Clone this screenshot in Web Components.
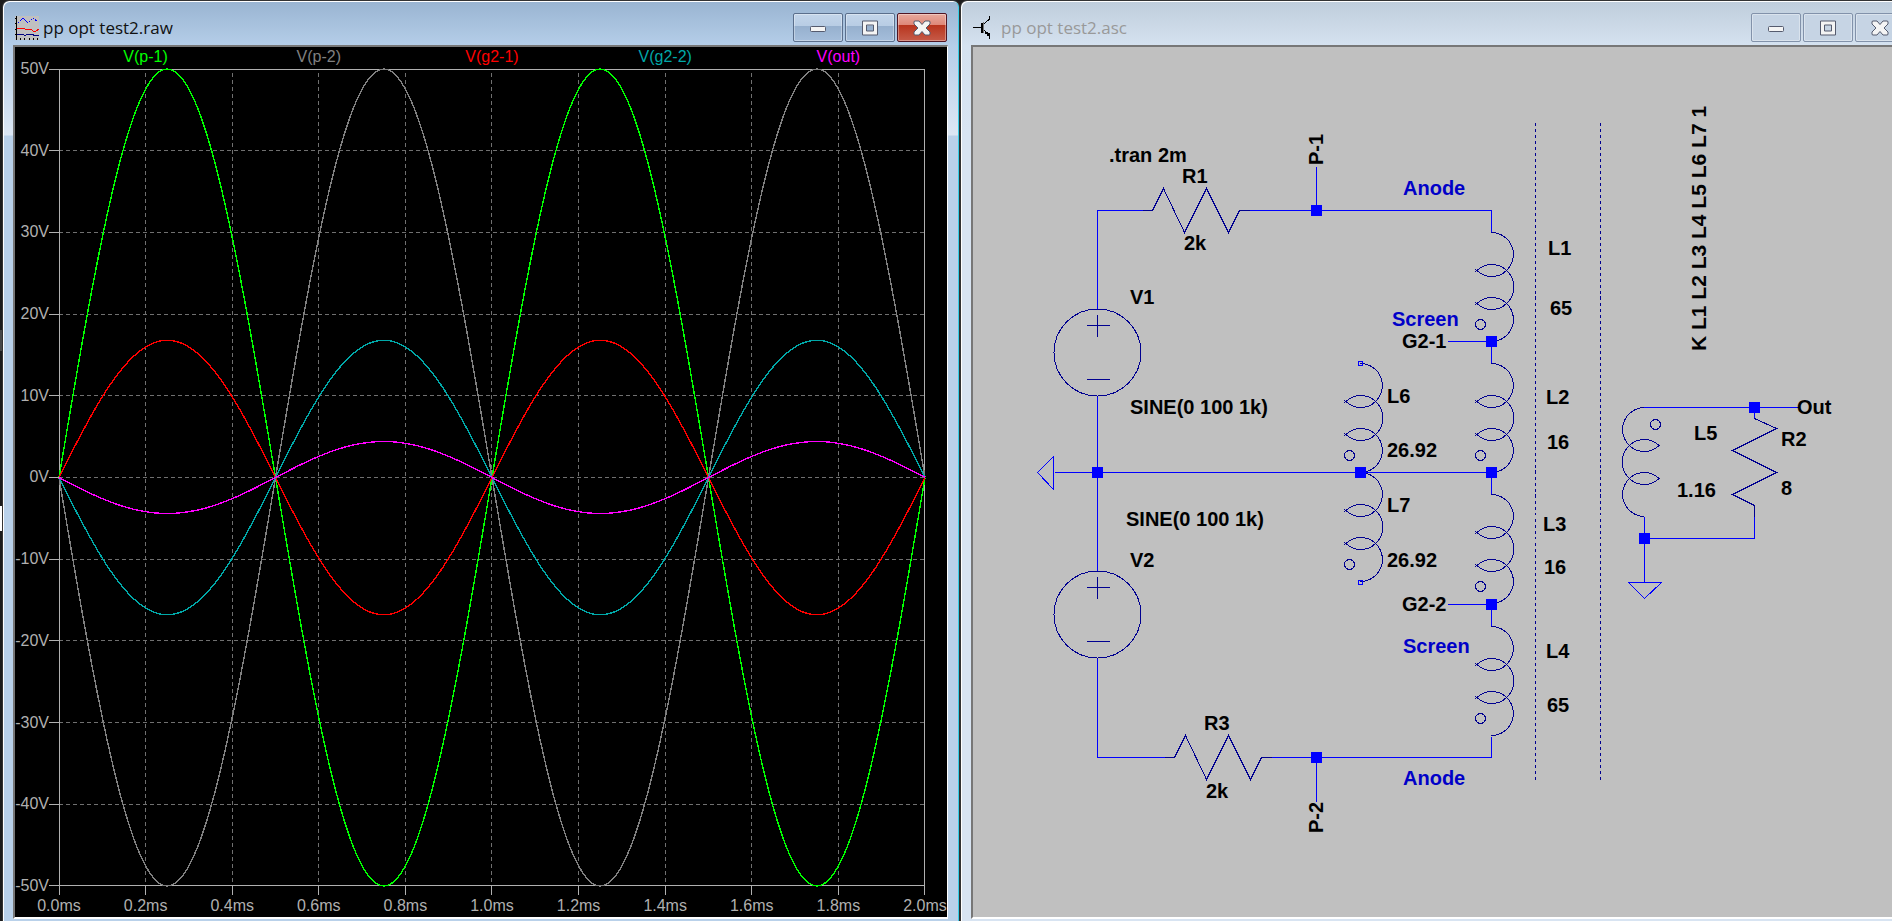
<!DOCTYPE html>
<html lang="en">
<head>
<meta charset="utf-8">
<title>pp opt test2</title>
<style>
  body {
    margin: 0;
    overflow: hidden;
    font-family: "Liberation Sans", Arial, sans-serif;
  }
</style>
</head>
<body>
<spice-desktop>
  <mdi-window label="pp opt test2.raw" active>
    <wave-icon slot="icon"></wave-icon>
    <wave-plot></wave-plot>
  </mdi-window>
  <mdi-window label="pp opt test2.asc">
    <transistor-icon slot="icon"></transistor-icon>
    <schematic-sheet></schematic-sheet>
  </mdi-window>
</spice-desktop>

<script>
// Small helper: every element here renders one static template
function attach(el, html) {
  const template = document.createElement('template');
  template.innerHTML = html;
  el.attachShadow({ mode: 'open' }).appendChild(template.content.cloneNode(true));
}

// desktop, the second window runs past the right edge
class SpiceDesktop extends HTMLElement {
  constructor() {
    super();
    attach(this, `
      <style>
        :host {
          display: grid;
          grid-template-columns: 1fr 1fr;
          height: 100vh;
          margin-right: -26px;
          padding-left: 2px;
          background: linear-gradient(#1c1c1c 330px, #484848 330px, #484848 351px, #1c1c1c 351px, #1c1c1c 506px, #fff 506px, #fff 531px, #1c1c1c 531px);
        }
      </style>
      <slot></slot>
    `);
  }
}

class MdiWindow extends HTMLElement {
  constructor() {
    super();
    attach(this, `
      <style>
        :host {
          --bar-top: #bfcddb;
          --bar-end: #d5e2f0;
          --side: #d8e4f2;
          --side-light: #d8e4f2;
          --edge: #d8e4f2;
          --title: #999;
          --btn: #c6d4e4;
          --btn-border: #8292aa;
          --close: #c6d4e4;
          --close-border: #8292aa;
          display: flex;
          flex-direction: column;
          box-sizing: border-box;
          min-width: 0;
          height: 100vh;
          padding: 0 10px 2px;
          border: 1px solid #333;
          border-bottom: 0;
          border-radius: 7px 7px 0 0;
          box-shadow: inset 1px 1px #fff, inset -1px 0 var(--edge);
          background: linear-gradient(var(--bar-top), var(--bar-end) 45px, var(--side-light) 134px, var(--side) 135px);
        }
        :host([active]) {
          --bar-top: #99b4d1;
          --bar-end: #b5cee9;
          --side: #b9d1ea;
          --side-light: #dce7f4;
          --edge: #35cfe8;
          --title: #111;
          --btn: linear-gradient(#c3d5ea, #b7cce4 46%, #96b0ce 46%, #a5bedb);
          --btn-border: #5b6f8c;
          --close: linear-gradient(#e7a99d, #de8677 42%, #b8351e 42%, #c65b49);
          --close-border: #501523;
        }
        header {
          display: flex;
          align-items: center;
          height: 29px;
          padding: 12px 2px 3px;
        }
        h1 {
          flex: 1;
          margin: 0 0 0 4px;
          color: var(--title);
          font: 17px/24px "Open Sans", "Noto Sans", sans-serif;
          white-space: nowrap;
        }
        nav {
          display: flex;
          gap: 2px;
        }
        button {
          display: grid;
          place-items: center;
          width: 50px;
          height: 29px;
          padding: 0;
          border: 1px solid var(--btn-border);
          border-radius: 2px;
          background: var(--btn);
          box-shadow: inset 0 0 0 1px rgba(255,255,255,0.35);
        }
        button.close {
          border-color: var(--close-border);
          background: var(--close);
        }
        button svg {
          fill: #f4f4f4;
          stroke: #555b6e;
        }
        .client {
          display: flex;
          flex: 1;
          min-height: 0;
          margin-right: 1px;
          border: 2px solid;
          border-width: 2px 1px 2px 2px;
          border-color: #777 #fff #fff #777;
        }
        ::slotted(:not([slot])) {
          flex: 1;
          min-width: 0;
        }
      </style>
      <header>
        <slot name="icon"></slot>
        <h1></h1>
        <nav>
          <button aria-label="Minimize">
            <svg width="18" height="16"><rect x="1.5" y="6.5" width="15" height="5" rx="1"/></svg>
          </button>
          <button aria-label="Maximize">
            <svg width="18" height="16"><path fill-rule="evenodd" d="M1.500 1H16.500V15H1.500ZM5.500 5V11H12.500V5Z"/></svg>
          </button>
          <button class="close" aria-label="Close">
            <svg width="18" height="16"><path d="M1 1.500L2 1H6L9 4.500L12 1H16L17 1.500V4L13 8L17 12V14.500L16 15H12L9 11.500L6 15H2L1 14.500V12L5 8L1 4Z"/></svg>
          </button>
        </nav>
      </header>
      <div class="client"><slot></slot></div>
    `);
  }

  connectedCallback() {
    this.shadowRoot.querySelector('h1').textContent = this.getAttribute('label');
  }
}

class WaveIcon extends HTMLElement {
  constructor() {
    super();
    attach(this, `
      <style>
        :host { display: block; width: 24px; height: 24px; }
        svg { display: block; fill: none; shape-rendering: crispEdges; }
      </style>
      <svg width="24" height="24" aria-hidden="true">
        <rect width="24" height="24" fill="#c0c0c0"/>
        <path d="M1 0V24" stroke="#000" stroke-width="1"/>
        <path d="M0 2H2M0 7H2M0 13H2M0 18H2M5 22V24M9 22V24M14 22V24M18 22V24M22 22V24" stroke="#000"/>
        <path d="M3 7L8 2L13 7L18 2L23 6" stroke="#00f" stroke-dasharray="2 1"/>
        <path d="M2 13L5 12L10 13H16L18 15H21L24 13" stroke="#f00"/>
        <path d="M2 18.500H8L10 19.500L12 18.500H18L19 19.500H24" stroke="#000080"/>
      </svg>
    `);
  }
}

class TransistorIcon extends HTMLElement {
  constructor() {
    super();
    attach(this, `
      <style>
        :host { display: block; width: 24px; height: 24px; }
        svg { display: block; fill: none; stroke: #000; shape-rendering: crispEdges; }
      </style>
      <svg width="24" height="24" aria-hidden="true">
        <path d="M0 11.500H8M16.500 0V3L11 8M11 14L16.500 20V23"/>
        <path d="M9 7V17" stroke-width="2"/>
        <path d="M10.500 6V17" stroke="#777"/>
        <path d="M12 16H15V17H17V20H14V18H12Z" fill="#000" stroke="none"/>
      </svg>
    `);
  }
}

const TRACES = [
  { name: 'V(p-1)', color: '#00ff00', volts: 50 },
  { name: 'V(p-2)', color: '#808080', volts: -50 },
  { name: 'V(g2-1)', color: '#ff0000', volts: 16.8 },
  { name: 'V(g2-2)', color: '#00a8a8', volts: -16.8 },
  { name: 'V(out)', color: '#ff00ff', volts: -4.4 }
];

class WavePlot extends HTMLElement {
  constructor() {
    super();
    attach(this, `
      <style>
        :host {
          display: grid;
          grid-template-columns: 44px 1fr;
          grid-template-rows: 22px 1fr 31px;
          padding-right: 22px;
          background: #000;
          color: #b0b0b0;
          font-size: 16px;
          line-height: 20px;
        }
        .legend {
          grid-column: 2;
          display: grid;
          grid-template-columns: repeat(5, 1fr);
          text-align: center;
        }
        .volts, .time {
          display: flex;
          justify-content: space-between;
        }
        .volts {
          flex-direction: column;
          padding-right: 10px;
        }
        .volts span {
          display: flex;
          align-items: center;
          justify-content: flex-end;
          height: 0;
        }
        .time {
          grid-column: 2;
          padding-top: 10px;
        }
        .time span {
          display: flex;
          justify-content: center;
          width: 0;
        }
        svg {
          display: block;
          width: 100%;
          height: 100%;
          min-height: 0;
          overflow: visible;
          fill: none;
          shape-rendering: crispEdges;
        }
        path { vector-effect: non-scaling-stroke; }
        .grid { stroke: #707070; stroke-dasharray: 4 3; }
        .axis { stroke: #b0b0b0; }
        .trace { stroke-width: 1.4; }
      </style>
      <div class="legend"></div>
      <div class="volts"></div>
      <svg viewBox="0 0 1000 1000" preserveAspectRatio="none" role="img" aria-label="Waveforms"></svg>
      <div class="time"></div>
    `);
  }

  connectedCallback() {
    const root = this.shadowRoot;
    const volts = [];
    const time = [];
    let grid = '';
    let ticks = '';
    for (let i = 0; i <= 10; i++) {
      volts.push(`<span>${50 - i * 10}V</span>`);
      time.push(`<span>${(i * 0.2).toFixed(1)}ms</span>`);
      if (i > 0 && i < 10) grid += `M0 ${i * 100}H1000M${i * 100} 5V1000`;
      ticks += `M-12 ${i * 100}H0M${i * 100} 1000V1011`;
    }
    root.querySelector('.legend').innerHTML =
      TRACES.map(t => `<span style="color:${t.color}">${t.name}</span>`).join('');
    root.querySelector('.volts').innerHTML = volts.join('');
    root.querySelector('.time').innerHTML = time.join('');
    root.querySelector('svg').innerHTML =
      `<path class="grid" d="${grid}"/><path class="axis" d="${ticks}M0 0H1000V1000H0Z"/>` +
      TRACES.map(t => `<path class="trace" stroke="${t.color}" d="${this.sine(t.volts)}"/>`).join('');
  }

  // two periods of a 1 kHz sine over 2 ms, -50V..50V full scale
  sine(peak) {
    let d = 'M0 500';
    for (let i = 1; i <= 200; i++) {
      const y = 500 - peak * 10 * Math.sin(i * Math.PI / 50);
      d += `L${i * 5} ${y.toFixed(1)}`;
    }
    return d;
  }
}

// x, baseline y, text, optional kind: c = comment, v = vertical, d = directive
const LABELS = [
  [136, 115, '.tran 2m'], [209, 136, 'R1'], [211, 203, '2k'],
  [157, 257, 'V1'], [157, 367, 'SINE(0 100 1k)'],
  [153, 479, 'SINE(0 100 1k)'], [157, 520, 'V2'],
  [231, 683, 'R3'], [233, 751, '2k'],
  [350, 118, 'P-1', 'v'], [350, 786, 'P-2', 'v'],
  [430, 148, 'Anode', 'c'], [419, 279, 'Screen', 'c'], [429, 301, 'G2-1'],
  [414, 356, 'L6'], [414, 410, '26.92'], [414, 465, 'L7'], [414, 520, '26.92'],
  [429, 564, 'G2-2'], [430, 606, 'Screen', 'c'], [430, 738, 'Anode', 'c'],
  [575, 208, 'L1'], [577, 268, '65'], [573, 357, 'L2'], [574, 402, '16'],
  [570, 484, 'L3'], [571, 527, '16'], [573, 611, 'L4'], [574, 665, '65'],
  [733, 304, 'K L1 L2 L3 L4 L5 L6 L7 1', 'v d'],
  [721, 393, 'L5'], [704, 450, '1.16'],
  [824, 367, 'Out'], [808, 399, 'R2'], [808, 448, '8']
];

const NODES = [
  [343, 163], [518, 294], [124, 425], [387, 425], [518, 425],
  [518, 557], [343, 710], [781, 360], [671, 491]
];

class SchematicSheet extends HTMLElement {
  constructor() {
    super();
    attach(this, `
      <style>
        :host { display: block; background: #c0c0c0; }
        svg { display: block; width: 100%; height: 100%; fill: none; }
        .lines { shape-rendering: crispEdges; }
        .wire { stroke: #0000ff; }
        .part { stroke: #000090; }
        .node { fill: #0000ff; }
        .core { stroke: #000090; stroke-dasharray: 3 3; }
        text { font: bold 20px "Liberation Sans", Arial, sans-serif; fill: #000; }
        .c { fill: #0000c8; }
        .d { font-size: 21px; }
      </style>
      <svg role="img" aria-label="Schematic">
        <defs>
          <path id="coil" d="M0 0A22 22 0 0 1 15 38Q9 44 0 44Q-8 44 -16 37M-16 39Q-8 32 0 32Q9 32 15 38A22 22 0 0 1 15 71Q9 77 0 77Q-8 77 -16 70M-16 72Q-8 65 0 65Q9 65 15 71A22 22 0 0 1 0 109M-6 92A5 5 0 0 1 -16 92A5 5 0 0 1 -6 92"/>
          <path id="zigzag" d="M-10 0H0L11 -22L32 22L54 -22L76 22L87 0H97"/>
          <g id="source">
            <circle r="43.500"/>
            <path d="M-11 -27H12M0 -38V-16M-11 27H12"/>
          </g>
        </defs>
        <g class="lines" transform="translate(.5 .5)">
          <path class="wire" d="M169 163H124V261M266 163H518V185M343 163V119M124 348V524M81 425H518M80 409V442L64 425ZM124 611V710H191M288 710H518V689M343 710V754M474 294H518V316M518 425V447M474 557H518V579M668 360H825M781 360V371M781 458V491H671M671 469V535M655 535H688L671 551Z"/>
          <g class="part">
            <use href="#zigzag" x="179" y="163"/>
            <use href="#zigzag" x="201" y="710"/>
            <use href="#source" x="124" y="305"/>
            <use href="#source" x="124" y="567"/>
            <use href="#coil" x="518" y="185"/>
            <use href="#coil" x="518" y="316"/>
            <use href="#coil" x="518" y="447"/>
            <use href="#coil" x="518" y="579"/>
            <use href="#coil" x="387" y="316"/>
            <use href="#coil" x="387" y="425"/>
            <use href="#coil" transform="translate(671 469) rotate(180)"/>
            <path d="M781 371L803 381L759 403L803 425L759 447L781 458V469"/>
          </g>
          <path class="core" d="M562 75V733M627 75V733"/>
          <path class="wire" d="M385 314H389V318H385ZM385 533H389V537H385Z"/>
        </g>
        <g id="nodes"></g>
        <g id="labels"></g>
      </svg>
    `);
  }

  connectedCallback() {
    this.shadowRoot.getElementById('nodes').innerHTML =
      NODES.map(([x, y]) => `<rect class="node" x="${x - 5}" y="${y - 5}" width="11" height="11"/>`).join('');
    this.shadowRoot.getElementById('labels').innerHTML =
      LABELS.map(([x, y, text, kind = '']) => {
        const turn = kind.startsWith('v') ? ` transform="rotate(-90 ${x} ${y})"` : '';
        return `<text class="${kind}" x="${x}" y="${y}"${turn}>${text}</text>`;
      }).join('');
  }
}

customElements.define('spice-desktop', SpiceDesktop);
customElements.define('mdi-window', MdiWindow);
customElements.define('wave-icon', WaveIcon);
customElements.define('transistor-icon', TransistorIcon);
customElements.define('wave-plot', WavePlot);
customElements.define('schematic-sheet', SchematicSheet);
</script>
</body>
</html>
